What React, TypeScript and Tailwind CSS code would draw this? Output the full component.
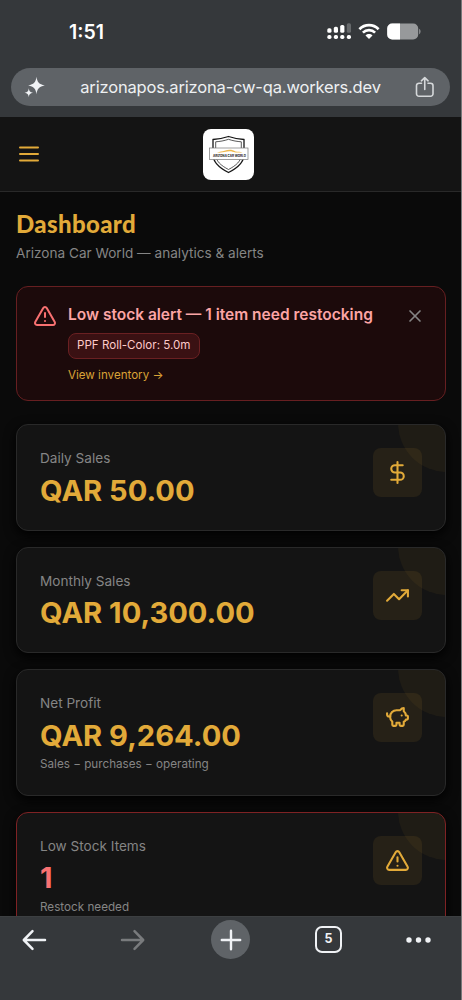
import React from 'react';
import {
  AlertTriangle,
  DollarSign,
  PiggyBank,
  TrendingUp,
  X,
} from 'lucide-react';
import { clsx } from 'clsx';

type Stat = {
  label: string;
  value: string;
  hint?: string;
  icon: React.ElementType;
  danger?: boolean;
};

const stats: Stat[] = [
  { label: 'Daily Sales', value: 'QAR 50.00', icon: DollarSign },
  { label: 'Monthly Sales', value: 'QAR 10,300.00', icon: TrendingUp },
  { label: 'Net Profit', value: 'QAR 9,264.00', hint: 'Sales − purchases − operating', icon: PiggyBank },
  { label: 'Low Stock Items', value: '1', hint: 'Restock needed', icon: AlertTriangle, danger: true },
];

const StatusBar: React.FC = () => (
  <div className="flex h-[68px] items-start justify-between pl-[69px] pr-[39px]">
    <span className="mt-[19px] text-[19.5px] font-semibold leading-[26px] text-white">1:51</span>
    <div className="mt-[23px] flex items-start">
      {/* Dual SIM signal */}
      <svg width="25" height="17" viewBox="0 0 25 17" fill="#fff">
        <rect x="0.3" y="5.2" width="4.2" height="4.6" rx="1.6" />
        <rect x="6.8" y="3.8" width="4.2" height="6" rx="1.6" />
        <rect x="13.2" y="2" width="4.2" height="7.8" rx="1.6" />
        <rect x="19.8" y="0.2" width="4.2" height="9.6" rx="1.6" fill="#66696b" />
        <rect x="0.3" y="12" width="4.2" height="4" rx="1.7" />
        <rect x="6.8" y="12" width="4.2" height="4" rx="1.7" />
        <rect x="13.2" y="12" width="4.2" height="4" rx="1.7" />
        <rect x="19.8" y="12" width="4.2" height="4" rx="1.7" />
      </svg>
      <svg className="ml-[6px]" width="22" height="17" viewBox="0 0 22 17" fill="none" stroke="#fff" strokeWidth="2.7">
        <path d="M1.4 6.2C6.8.8 15.2.8 20.6 6.2" />
        <path d="M4.9 9.6c3.4-3.3 8.8-3.3 12.2 0" />
        <path d="M7.5 12.5c2-1.9 5-1.9 7 0L11 16z" fill="#fff" stroke="none" />
      </svg>
      <svg className="ml-[7px]" width="35" height="17" viewBox="0 0 35 17">
        <rect x="0.2" y="0.6" width="31" height="15.8" rx="5" fill="#97999b" />
        <path d="M5.2.6H13v15.8H5.2a5 5 0 0 1-5-5V5.6a5 5 0 0 1 5-5z" fill="#fff" />
        <path d="M32.2 5.8c1.7.6 1.7 4.8 0 5.4z" fill="#97999b" />
      </svg>
    </div>
  </div>
);

const AddressBar: React.FC = () => (
  <div className="mx-[11px] flex h-[38px] items-center rounded-full bg-[#5f6367] pl-[13px] pr-[15px]">
    <svg width="22" height="22" viewBox="0 0 22 22" fill="#f0f2f5">
      <path d="M12.5.8c.8 5.6 2.6 7.5 8.3 8.7-5.7 1.2-7.5 3.1-8.3 8.7-.8-5.6-2.6-7.5-8.3-8.7 5.7-1.2 7.5-3.1 8.3-8.7z" />
      <path d="M4.8 12.2c.4 3 1.3 4 4.2 4.5-2.9.6-3.8 1.5-4.2 4.5-.4-3-1.3-3.9-4.2-4.5 2.9-.5 3.8-1.5 4.2-4.5z" />
    </svg>
    <span className="flex-1 text-center text-[16.5px] leading-none tracking-[-0.17px] text-[#eef0f2]">
      arizonapos.arizona-cw-qa.workers.dev
    </span>
    <svg width="20" height="22" viewBox="0 0 20 22" fill="none" stroke="#d5d8da" strokeWidth="1.6" strokeLinecap="round" strokeLinejoin="round">
      <path d="M6.5 7.2H4A2.5 2.5 0 0 0 1.5 9.7v8A2.5 2.5 0 0 0 4 20.2h11.5a2.5 2.5 0 0 0 2.5-2.5v-8a2.5 2.5 0 0 0-2.5-2.5H13" />
      <path d="M9.75 13.5V1.8M6.4 4.8l3.35-3.2 3.35 3.2" />
    </svg>
  </div>
);

const Logo: React.FC = () => (
  <div className="flex h-[51px] w-[51px] items-center justify-center rounded-lg bg-white">
    <svg width="51" height="51" viewBox="0 0 51 51" fill="none">
      <path d="M10 10.5c5-.2 10-1.2 15.5-3 5.5 1.8 10.5 2.8 15.5 3v15c0 8.5-6.5 13.5-15.5 18-9-4.5-15.5-9.5-15.5-18z" stroke="#161616" strokeWidth="1.3" />
      <path d="M12.7 12.8c4.3-.3 8.3-1 12.8-2.5 4.5 1.5 8.5 2.2 12.8 2.5v12.5c0 7-5.3 11.2-12.8 15.2-7.5-4-12.8-8.2-12.8-15.2z" stroke="#303030" strokeWidth="0.8" />
      <rect x="6.5" y="19" width="38.5" height="11.5" fill="#fff" stroke="#777" strokeWidth="0.7" />
      <path d="M14 24c3-1.7 5-1.2 7.5-2.2 4-1.5 8-1.3 11 .7 2 .7 5-.2 7 1.3-4.5-.8-7 .2-10-1-4-1.5-8 1-15.5 1.2z" fill="#efb94e" />
      <text x="26.5" y="28.2" textAnchor="middle" fontSize="3" fontWeight="700" fontFamily="Inter, sans-serif" fill="#1b1b1b" textLength="33" lengthAdjust="spacingAndGlyphs">ARIZONA CAR WORLD</text>
    </svg>
  </div>
);

const StockAlert: React.FC = () => (
  <div className="flex h-[115px] items-start rounded-xl border border-[#671f21] bg-[#1c0a0b] pl-4 pr-[19.5px] pt-[17px]">
    <AlertTriangle className="h-[24px] w-[24px] shrink-0 text-[#f87171]" strokeWidth={2} />
    <div className="ml-[11px] flex-1">
      <h2 className="whitespace-nowrap text-[15.5px] font-semibold leading-[21px] text-[#fca5a5]">Low stock alert — 1 item need restocking</h2>
      <div className="mt-2 flex">
        <span className="flex h-[26px] items-center rounded-lg border border-[#6a2022] bg-[#3a1113] px-2 text-[11.6px] text-[#fecaca]">
          PPF Roll-Color: 5.0m
        </span>
      </div>
      <a href="#" className="mt-[7px] block text-[11.6px] leading-[18px] text-[#d9a236]">View inventory →</a>
    </div>
    <button className="mt-[2px]">
      <X className="h-5 w-5 text-[#858585]" strokeWidth={2} />
    </button>
  </div>
);

const StatCard: React.FC<{ stat: Stat }> = ({ stat }) => {
  const Icon = stat.icon;
  return (
    <div
      className={clsx(
        'relative flex shrink-0 items-start justify-between overflow-hidden rounded-xl border bg-[#141414] px-[23px] pt-[23px] shadow-[0_4px_12px_#000]',
        stat.hint ? 'h-[126.4px]' : 'h-[106.7px]',
        stat.danger ? 'border-[#7f2224]' : 'border-[#292929]',
      )}
    >
      <div className="absolute -right-[51px] -top-[51px] h-[98px] w-[98px] rounded-full bg-[#e2aa39]/6" />
      <div>
        <p className="text-[13.6px] leading-[21px] text-[#858585]">{stat.label}</p>
        <p className={clsx('mt-[3.5px] text-[29.1px] font-bold leading-[36px]', stat.danger ? 'text-[#f87171]' : 'text-[#e2aa39]')}>
          {stat.value}
        </p>
        {stat.hint && <p className="mt-[2.5px] text-[11.7px] leading-[16px] text-[#858585]">{stat.hint}</p>}
      </div>
      <div className="relative flex h-[49px] w-[49px] items-center justify-center rounded-lg bg-[#e2aa39]/9">
        <Icon className="h-[25px] w-[25px] text-[#e2aa39]" strokeWidth={2} />
      </div>
    </div>
  );
};

const BottomBar: React.FC = () => (
  <nav className="h-[84px] shrink-0 border-t border-[#3c3f41] bg-[#35383b]">
    <div className="flex h-[45px] items-center pl-[22px] text-[#f0f2f5]">
      <svg width="25" height="22" viewBox="0 0 25 22" fill="none" stroke="currentColor" strokeWidth="2.5" strokeLinecap="round" strokeLinejoin="round">
        <path d="M23 11H2M10.5 2.2 1.8 11l8.7 8.8" />
      </svg>
      <svg className="ml-[73px] text-[#797b7d]" width="25" height="22" viewBox="0 0 25 22" fill="none" stroke="currentColor" strokeWidth="2.5" strokeLinecap="round" strokeLinejoin="round">
        <path d="M2 11h21M14.5 2.2l8.7 8.8-8.7 8.8" />
      </svg>
      <div className="ml-[66px] flex h-[39px] w-[39px] items-center justify-center rounded-full bg-[#5f6367]">
        <svg width="22" height="22" viewBox="0 0 22 22" fill="none" stroke="currentColor" strokeWidth="2.4" strokeLinecap="round">
          <path d="M11 1.8v18.4M1.8 11h18.4" />
        </svg>
      </div>
      <div className="ml-[65px] flex h-[27px] w-[27px] items-center justify-center rounded-[7px] border-2 border-current text-[12.5px] font-bold leading-none">5</div>
      <svg className="ml-[64px]" width="25" height="6" viewBox="0 0 25 6" fill="currentColor">
        <circle cx="3" cy="3" r="2.7" />
        <circle cx="12.5" cy="3" r="2.7" />
        <circle cx="22" cy="3" r="2.7" />
      </svg>
    </div>
  </nav>
);

const App: React.FC = () => {
  return (
    <div className="flex h-[1000px] w-[462px] flex-col overflow-hidden border-r border-[#77797a] bg-[#0a0a0a] font-['Inter',sans-serif]">
      <div className="h-[117px] shrink-0 bg-[#35383b]">
        <StatusBar />
        <AddressBar />
      </div>

      <header className="grid h-[75px] shrink-0 grid-cols-3 items-center border-b border-[#292929] bg-[#141414] pl-[18px] pr-[22px]">
        <button className="text-[#e2aa39]">
          <svg width="22" height="18" viewBox="0 0 22 18" fill="none" stroke="currentColor" strokeWidth="2" strokeLinecap="round">
            <path d="M2 2.5h18M2 9h18M2 15.5h18" />
          </svg>
        </button>
        <div className="flex justify-center">
          <Logo />
        </div>
      </header>

      <main className="flex min-h-0 flex-1 flex-col overflow-hidden pl-4 pr-[15.5px] pt-4">
        <h1 className="font-['Lato',sans-serif] text-[24px] font-black leading-[32px] tracking-[0.35px] text-[#e2aa39]">Dashboard</h1>
        <p className="mt-[3px] text-[13.6px] leading-[20px] text-[#858585]">Arizona Car World — analytics &amp; alerts</p>
        <div className="mt-[23px]">
          <StockAlert />
        </div>
        <div className="mt-[23px] flex flex-col gap-4">
          {stats.map((stat) => (
            <StatCard key={stat.label} stat={stat} />
          ))}
        </div>
      </main>

      <BottomBar />
    </div>
  );
};

export default App;
